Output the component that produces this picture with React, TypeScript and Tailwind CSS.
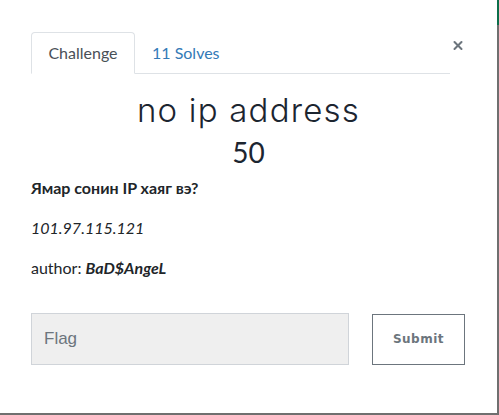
import { X } from "lucide-react";

export default function App() {
  return (
    <div className="flex h-[415px] w-[499px] overflow-hidden bg-white font-['Lato',sans-serif] text-[#212529]">
      <div className="flex w-[497px] flex-col border-b-2 border-[#6f6f6f]">
        <div className="flex items-start pl-[31px] pr-[32px] pt-[32px]">
          <div className="flex flex-1 border-b border-[#dee2e6]">
            <div className="-mb-px flex h-[42px] w-[104px] items-center justify-center rounded-t border border-b-white border-[#dee2e6] bg-white text-[16px] text-[#495057]">
              Challenge
            </div>
            <div className="flex h-[41px] items-center px-[17px] text-[16px] text-[#337ab7]">
              11 Solves
            </div>
          </div>
          <button className="ml-[1px] mt-[6px] flex h-[14px] w-[14px] items-center justify-center text-[#6c757d]">
            <X size={15} strokeWidth={3.5} />
          </button>
        </div>

        <div className="px-[31px]">
          <h2 className="mt-[13px] text-center font-['Inter',sans-serif] text-[33px] font-light leading-[46px] tracking-[1.2px] text-[#1c2530]">
            no ip address
          </h2>
          <h3 className="text-center font-['Lato',sans-serif] text-[28px] leading-[38px] text-[#1c2530]">50</h3>

          <p className="mt-[5px] text-[16px] font-bold leading-[24px]">Ямар сонин IP хаяг вэ?</p>
          <p className="mt-[16px] text-[16px] italic leading-[24px]">101.97.115.121</p>
          <p className="mt-[16px] text-[16px] leading-[24px]">
            author: <em className="font-bold">BaD$AngeL</em>
          </p>

          <div className="mt-[33px] flex items-center">
            <input
              placeholder="Flag"
              className="h-[52px] w-[318px] border border-[#d0d4d9] bg-[#efefef] px-[12px] font-['Liberation_Sans',sans-serif] text-[17px] text-[#495057] placeholder:text-[#6c757d] outline-none"
            />
            <button className="ml-[23px] h-[51px] w-[93px] border border-[#6c757d] bg-white font-['DejaVu_Sans',sans-serif] text-[12px] font-bold tracking-[0.5px] text-[#6c757d]">
              Submit
            </button>
          </div>
        </div>
      </div>
      <div className="flex w-[2px] flex-col">
        <div className="h-[25px] bg-[#0b6e4a]" />
        <div className="flex-1 bg-[#6f6f6f]" />
      </div>
    </div>
  );
}
